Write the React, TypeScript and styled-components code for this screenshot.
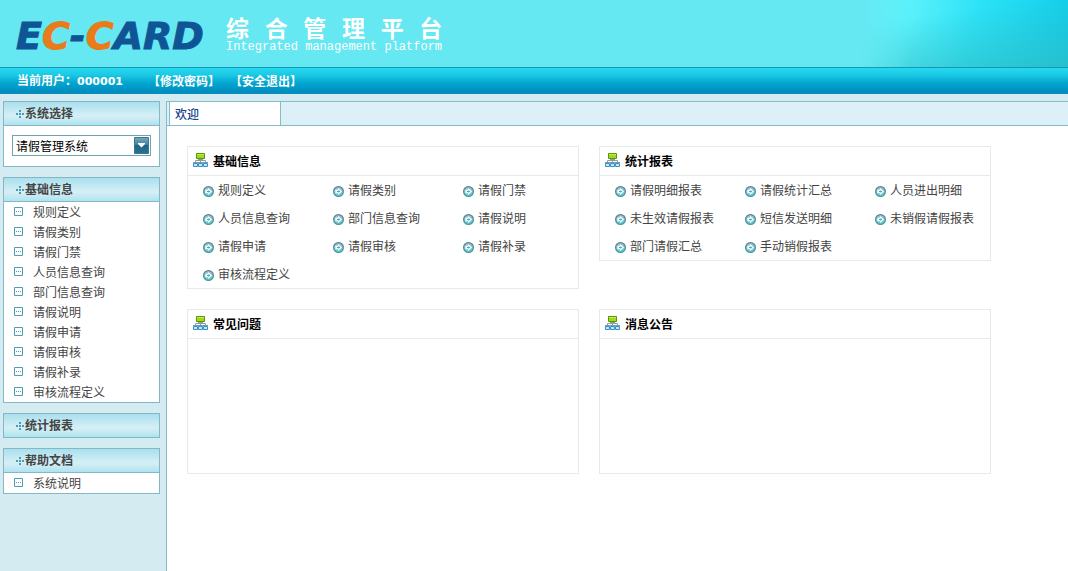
import React from "react";
import styled, { createGlobalStyle } from "styled-components";

const GlobalStyle = createGlobalStyle`
  * { box-sizing: border-box; }
  html, body, #root { min-height: 100vh; }
  body {
    margin: 0;
    background: #d4ecf1;
    color: #444;
    font: 12px/20px "Noto Sans CJK SC", sans-serif;
  }
  a { color: inherit; text-decoration: none; }
  a:hover { text-decoration: underline; }
  h1, h2, p, ul { margin: 0; padding: 0; font-size: inherit; }
  ul { list-style: none; }
`;

const Page = styled.div`
  display: flex;
  flex-direction: column;
  min-height: 100vh;
`;

const Banner = styled.header`
  display: flex;
  height: 67px;
  padding-left: 16px;
  overflow: hidden;
  background: #65e8f2;
`;

const BannerShade = styled.div`
  width: 208px;
  margin-left: auto;
  background:
    linear-gradient(172deg, rgba(50, 185, 192, 0) 25%, rgba(50, 185, 192, 0.65) 100%),
    linear-gradient(100deg, #6af4fd 0%, #58f0fb 25%, #2ce2f6 55%, #0fcdea 100%);
  mask-image: linear-gradient(90deg, transparent, #000 50px);
`;

const Logo = styled.div`
  width: 210px;
  padding-top: 14px;
  color: #0f5596;
  font: italic bold 38px/44px "DejaVu Sans", sans-serif;
  -webkit-text-stroke: 1px currentColor;
  white-space: nowrap;
`;

const LogoAccent = styled.span`
  color: #e87b1a;
`;

const Brand = styled.div`
  padding-top: 14px;
  color: #fff;
  white-space: pre;
`;

const BrandTitle = styled.h1`
  font-size: 23px;
  line-height: 26px;
`;

const BrandSubtitle = styled.p`
  font: 12px/14px "Liberation Mono", monospace;
`;

const UserBar = styled.nav`
  display: flex;
  align-items: center;
  height: 27px;
  padding-left: 17px;
  border-top: 1px solid #1797b5;
  border-bottom: 1px solid #0b8fb8;
  background: linear-gradient(#25d9ef, #1ccbe6 25%, #03a5cf 60%, #008bbf);
  color: #fff;
  font-weight: bold;
`;

const UserName = styled.span`
  margin-right: 25px;
`;

const UserCode = styled.span`
  font: bold 11px/20px "DejaVu Sans", sans-serif;
`;

const UserLink = styled.a`
  margin-right: 10px;
`;

const Body = styled.div`
  display: flex;
  flex: 1;
  padding-top: 7px;
`;

const Sidebar = styled.aside`
  display: flex;
  flex-direction: column;
  flex: none;
  gap: 10px;
  width: 166px;
  padding: 0 6px 16px 3px;
`;

const Panel = styled.section`
  border: 1px solid #84b8c6;
  background: #fff;
`;

const PanelTitle = styled.h2<{ $open: boolean }>`
  display: flex;
  align-items: center;
  height: ${(p) => (p.$open ? 24 : 23)}px;
  padding: 0 0 2px 12px;
  border-bottom: ${(p) => (p.$open ? "1px solid #84b8c6" : "0")};
  background: linear-gradient(#a9e0ee, #d3eef5 55%, #d3eef5 65%, #aee3f0);
  svg { margin-top: 2px; }
`;

const SelectWrap = styled.label`
  position: relative;
  display: block;
  margin: 9px 8px 10px;
`;

const SystemSelect = styled.select`
  display: block;
  width: 100%;
  height: 21px;
  padding: 0 20px 0 3px;
  border: 1px solid #6ea4ae;
  border-radius: 0;
  appearance: none;
  background: #fff;
  color: #000;
  font: inherit;
`;

const SelectArrow = styled.svg`
  position: absolute;
  top: 2px;
  right: 2px;
  pointer-events: none;
`;

const MenuLink = styled.a`
  display: flex;
  align-items: center;
  gap: 10px;
  height: 20px;
  padding-left: 10px;
  svg { margin-bottom: 2px; }
`;

const Main = styled.main`
  flex: 1;
  min-width: 0;
  border-left: 1px solid #84bcc9;
  background: #fff;
`;

const TabStrip = styled.div`
  display: flex;
  height: 25px;
  padding-left: 2px;
  border: solid #84bcc9;
  border-width: 1px 0;
  background: #ddf0f8;
`;

const Tab = styled.button`
  width: 112px;
  padding: 0 5px;
  border: solid #84bcc9;
  border-width: 0 1px;
  background: #fff;
  color: #15428b;
  font: inherit;
  font-weight: 500;
  text-align: left;
`;

const Cards = styled.div`
  display: grid;
  grid-template-columns: 1fr 1fr;
  align-items: start;
  gap: 20px;
  max-width: 844px;
  padding: 20px;
`;

const Card = styled.section`
  border: 1px solid #e9e9e9;
`;

const CardTitle = styled.h2`
  display: flex;
  align-items: center;
  gap: 4px;
  height: 29px;
  padding-left: 5px;
  border-bottom: 1px solid #e9e9e9;
  color: #000;
  svg { margin-bottom: 2px; }
`;

const LinkGrid = styled.ul`
  display: grid;
  grid-template-columns: repeat(3, 1fr);
`;

const CardLink = styled.a`
  display: flex;
  align-items: center;
  gap: 4px;
  height: 28px;
  padding-left: 15px;
  white-space: nowrap;
  svg { margin-top: 2px; }
`;

const EmptyBody = styled.div`
  height: 134px;
`;

const PlusDots = () => (
  <svg width="9" height="10" viewBox="0 0 9 10" fill="#4e9ab5" aria-hidden="true">
    <path d="M3 1h2v2h-2zM3 4h2v2h-2zM3 7h2v2h-2zM0 4h2v2h-2zM6 4h2v2h-2z" />
  </svg>
);

const NodeBox = () => (
  <svg width="9" height="9" viewBox="0 0 9 9" aria-hidden="true">
    <path d="M.5.5h8v8h-8z" fill="#fff" stroke="#4d9db5" />
    <path d="M2 4h1v1H2zM4 4h1v1H4zM6 4h1v1H6z" fill="#4d9db5" />
  </svg>
);

const Network = () => (
  <svg width="16" height="16" viewBox="0 0 16 16" aria-hidden="true">
    <path d="M7.5 6v4M2.5 11V8.500h10V11M5 7.500h5" stroke="#999" fill="none" />
    <path d="M3.500 1.500h8v5h-8z" fill="#a4d61a" stroke="#4f9a0c" />
    <path d="M4 2h7v1H4z" fill="#c8ec4c" />
    <path d="M.5 11.500h4v3h-4zM5.500 11.500h4v3h-4zM10.500 11.500h4v3h-4z" fill="#c4e8fa" stroke="#3a90c6" />
    <path d="M0 10h5v1H0zM5 10h5v1H5zM10 10h5v1h-5z" fill="#6c9fbd" />
  </svg>
);

const ArrowBadge = () => (
  <svg width="11" height="11" viewBox="0 0 11 11" aria-hidden="true">
    <defs>
      <linearGradient id="badgeRing" x1="0" y1="0" x2="0" y2="1">
        <stop offset="0" stopColor="#5f7f93" />
        <stop offset="1" stopColor="#459aa2" />
      </linearGradient>
      <linearGradient id="badgeFill" x1="0" y1="0" x2="0" y2="1">
        <stop offset="0" stopColor="#a3c3d2" />
        <stop offset="1" stopColor="#58cfd2" />
      </linearGradient>
    </defs>
    <circle cx="5.500" cy="5.500" r="4.900" fill="url(#badgeFill)" stroke="url(#badgeRing)" strokeWidth="1.200" />
    <path d="M5 2 9 5.500 5 9V7.200H2.400V3.800H5z" fill="#fff" />
    <path d="M4 5h1.500V4l1.800 1.500L5.500 7V6H4z" fill="#5a9fae" />
  </svg>
);

const SidePanel = ({ title, items }: { title: string; items: string[] }) => (
  <Panel>
    <PanelTitle $open={items.length > 0}><PlusDots />{title}</PanelTitle>
    {items.length > 0 && (
      <ul>
        {items.map((item) => (
          <li key={item}><MenuLink href="#"><NodeBox />{item}</MenuLink></li>
        ))}
      </ul>
    )}
  </Panel>
);

const InfoCard = ({ title, items }: { title: string; items?: string[] }) => (
  <Card>
    <CardTitle><Network />{title}</CardTitle>
    {items ? (
      <LinkGrid>
        {items.map((item) => (
          <li key={item}><CardLink href="#"><ArrowBadge />{item}</CardLink></li>
        ))}
      </LinkGrid>
    ) : (
      <EmptyBody />
    )}
  </Card>
);

const basicItems = ["规则定义", "请假类别", "请假门禁", "人员信息查询", "部门信息查询", "请假说明", "请假申请", "请假审核", "请假补录", "审核流程定义"];
const reportItems = ["请假明细报表", "请假统计汇总", "人员进出明细", "未生效请假报表", "短信发送明细", "未销假请假报表", "部门请假汇总", "手动销假报表"];

export default function App() {
  return (
    <Page>
      <GlobalStyle />
      <Banner>
        <Logo>E<LogoAccent>C</LogoAccent>-<LogoAccent>C</LogoAccent>ARD</Logo>
        <Brand>
          <BrandTitle>综   合   管   理   平   台</BrandTitle>
          <BrandSubtitle>Integrated management platform</BrandSubtitle>
        </Brand>
        <BannerShade />
      </Banner>
      <UserBar>
        <UserName>当前用户：<UserCode>000001</UserCode></UserName>
        <UserLink href="#">【修改密码】</UserLink>
        <UserLink href="#">【安全退出】</UserLink>
      </UserBar>
      <Body>
        <Sidebar>
          <Panel>
            <PanelTitle $open><PlusDots />系统选择</PanelTitle>
            <SelectWrap>
              <SystemSelect aria-label="系统选择">
                <option>请假管理系统</option>
              </SystemSelect>
              <SelectArrow width="15" height="17" viewBox="0 0 15 17" aria-hidden="true">
                <defs>
                  <linearGradient id="arrowFill" x1="0" y1="0" x2="0" y2="1">
                    <stop offset="0" stopColor="#76a9bf" />
                    <stop offset="0.5" stopColor="#3c7d99" />
                    <stop offset="0.5" stopColor="#1f6686" />
                    <stop offset="1" stopColor="#2b7190" />
                  </linearGradient>
                </defs>
                <path d="M.5.5h14v16H.5z" fill="url(#arrowFill)" stroke="#3b7890" />
                <path d="M4 6h7v1l-3.500 3.500L4 7z" fill="#fff" />
              </SelectArrow>
            </SelectWrap>
          </Panel>
          <SidePanel title="基础信息" items={basicItems} />
          <SidePanel title="统计报表" items={[]} />
          <SidePanel title="帮助文档" items={["系统说明"]} />
        </Sidebar>
        <Main>
          <TabStrip><Tab type="button">欢迎</Tab></TabStrip>
          <Cards>
            <InfoCard title="基础信息" items={basicItems} />
            <InfoCard title="统计报表" items={reportItems} />
            <InfoCard title="常见问题" />
            <InfoCard title="消息公告" />
          </Cards>
        </Main>
      </Body>
    </Page>
  );
}
